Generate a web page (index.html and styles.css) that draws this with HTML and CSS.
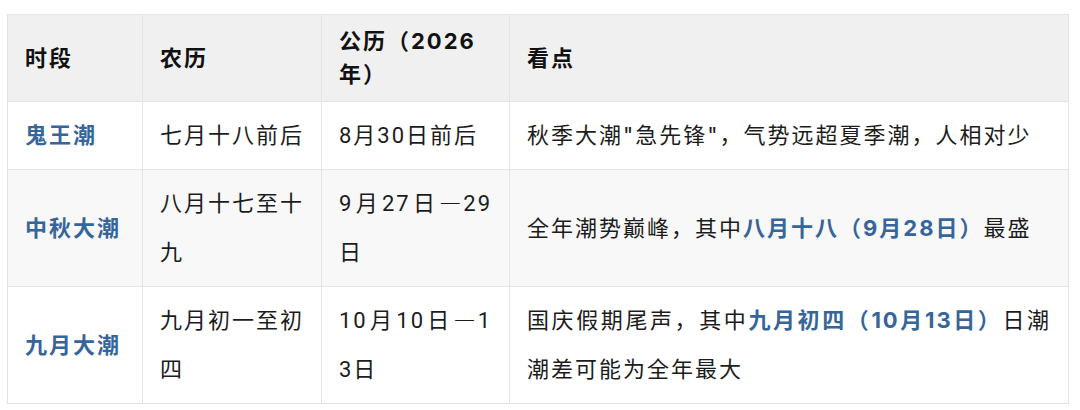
FILE: index.html
```html
<!DOCTYPE html>
<html lang="zh-CN">
<head>
<meta charset="utf-8">
<title>大潮时段</title>
<link rel="stylesheet" href="styles.css">
</head>
<body>
<div class="wrap">
<table class="tide">
<colgroup>
<col class="c1"><col class="c2"><col class="c3"><col class="c4">
</colgroup>
<thead>
<tr><th>时段</th><th>农历</th><th>公历（2026年）</th><th>看点</th></tr>
</thead>
<tbody>
<tr>
<td><strong class="hl">鬼王潮</strong></td>
<td>七月十八前后</td>
<td class="date">8月30日前后</td>
<td>秋季大潮"急先锋"，气势远超夏季潮，人相对少</td>
</tr>
<tr class="alt">
<td><strong class="hl">中秋大潮</strong></td>
<td>八月十七至十九</td>
<td class="date">9月27日<span class="dash">—</span>29日</td>
<td>全年潮势巅峰，其中<strong class="hl">八月十八（9月28日）</strong>最盛</td>
</tr>
<tr>
<td><strong class="hl">九月大潮</strong></td>
<td>九月初一至初四</td>
<td class="date">10月10日<span class="dash">—</span>13日</td>
<td>国庆假期尾声，其中<strong class="hl">九月初四（10月13日）</strong>日潮潮差可能为全年最大</td>
</tr>
</tbody>
</table>
</div>
</body>
</html>
```
FILE: styles.css
```css
html, body {
  margin: 0;
  padding: 0;
  background: #ffffff;
}
.wrap {
  padding: 14px 12px 0 7px;
}
.tide {
  width: 1061px;
  table-layout: fixed;
  border-collapse: collapse;
  font-family: "Inter", "Noto Sans CJK SC", sans-serif;
  font-size: 22px;
  letter-spacing: 2px;
  color: #1c1c1c;
}
.c1 { width: 135px; }
.c2 { width: 179px; }
.c3 { width: 188px; }
.c4 { width: 559px; }
.tide th, .tide td {
  border: 1px solid #e4e4e4;
  vertical-align: middle;
  text-align: justify;
  word-break: break-all;
}
.tide th {
  background: #f0f0f0;
  font-weight: 700;
  line-height: 33px;
  padding: 10px 17px;
  text-align: left;
  color: #111111;
}
.tide td {
  background: #ffffff;
  line-height: 49px;
  padding: 9px 17px;
  font-weight: 400;
}
.tide td.date {
  font-family: "Roboto", "Noto Sans CJK SC", sans-serif;
}
.tide td.date .dash {
  font-family: "Noto Sans CJK SC", sans-serif;
  line-height: 0;
}
.tide tr.alt td {
  background: #f8f8f8;
}
.hl {
  color: #35659a;
  font-weight: 700;
}
```
